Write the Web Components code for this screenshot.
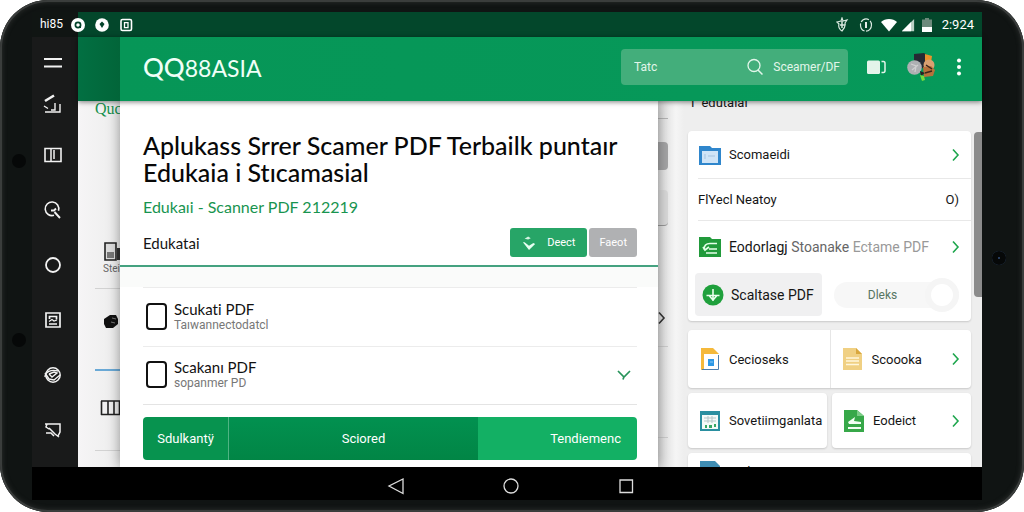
<!DOCTYPE html>
<html lang="id">
<head>
<meta charset="utf-8">
<meta name="viewport" content="width=device-width, initial-scale=1">
<title>QQ88ASIA</title>
<style>
  body {
    margin: 0;
    background: #fff;
    font-family: Roboto, "Liberation Sans", sans-serif;
    font-variant-ligatures: none;
    color: #151515;
  }
</style>
</head>
<body>
<tablet-frame>
  <status-bar slot="status"></status-bar>
  <side-rail slot="rail"></side-rail>
  <app-bar slot="bar"></app-bar>
  <peek-left slot="body"></peek-left>
  <article-panel slot="body">
    <span slot="title">Aplukass Srrer Scamer PDF Terbailk puntaır Edukaia i Stıcamasial</span>
    <span slot="subtitle">Edukaıi - Scanner PDF 212219</span>
    <check-row slot="rows" label="Scukati PDF" note="Taıwannectodatcl"></check-row>
    <check-row slot="rows" label="Scakanı PDF" note="sopanmer PD" open></check-row>
  </article-panel>
  <peek-right slot="body"></peek-right>
  <side-panel slot="body"></side-panel>
  <nav-bar slot="nav"></nav-bar>
</tablet-frame>

<script>
const ICONS = {
  menu: ['0 0 20 20', '<path d="M1 6h18M1 13.500h18" stroke="currentColor" stroke-width="2"/>'],
  edit: ['0 0 20 20', '<path d="M2 7L11 1.500" stroke="currentColor" stroke-width="2.600"/><path d="M1 12l4 2.500M2 18h15V10M12 9v7H8" fill="none" stroke="currentColor" stroke-width="1.400"/>'],
  book: ['0 0 20 20', '<path d="M2 3.500h16v13H2z" fill="none" stroke="currentColor" stroke-width="1.600"/><path d="M8 4v12M11 5v9" stroke="currentColor" stroke-width="1.500"/>'],
  find: ['0 0 20 20', '<path d="M11 15.300a6.800 6.800 0 1 1 4.500-4.500" fill="none" stroke="currentColor" stroke-width="1.600"/><path d="M8 10.500h3l2-2M11.500 12l5.500 6" fill="none" stroke="currentColor" stroke-width="1.900"/>'],
  ring: ['0 0 20 20', '<circle cx="10" cy="10" r="7" fill="none" stroke="currentColor" stroke-width="1.800"/>'],
  image: ['0 0 20 20', '<path d="M3 3h14v14H3zM6.500 9V6.500h7v3M6 14h8" fill="none" stroke="currentColor" stroke-width="1.700"/><path d="M6 11.500l3-2 2 1.500 3-1" fill="none" stroke="currentColor" stroke-width="1.200"/>'],
  globe: ['0 0 20 20', '<circle cx="10" cy="10" r="7.200" fill="none" stroke="currentColor" stroke-width="1.500"/><path d="M2 12c0-5 6-8 13-6M6 9l3 3 5-4-3-1-5 2M2 8l4 6 5 1 6-5" fill="none" stroke="currentColor" stroke-width="1.400"/>'],
  share: ['0 0 20 20', '<path d="M2 4h15v8l-2 4M4 4l-1 3 3 2M6 8l6 6 4 3M3 13h5l3 3" fill="none" stroke="currentColor" stroke-width="1.500"/>'],
  dotq: ['0 0 16 16', '<circle cx="8" cy="8" r="7" fill="#fff"/><circle cx="8" cy="8" r="2.600" fill="none" stroke="#03432a" stroke-width="1.700"/><path d="M9 9l2 2" stroke="#03432a"/>'],
  dotp: ['0 0 16 16', '<circle cx="8" cy="8" r="6.800" fill="#fff"/><path d="M8 4.500l2.500 2.500L8 11 5.500 7z" fill="#03432a"/>'],
  boxq: ['0 0 16 16', '<rect x="3" y="2.500" width="10.500" height="11" rx="1.500" fill="none" stroke="#fff" stroke-width="1.600"/><path d="M6.500 5.700h3.500v5h-3.500z" fill="none" stroke="#fff" stroke-width="1.300"/>'],
  shield: ['0 0 16 16', '<path d="M3 5l4-1 1-3 1 3 4-1-2 3c1 4-1 6-3 8-2-1-4-4-3-7z" fill="none" stroke="#dbe9e1" stroke-width="1.200"/><path d="M8 4v7M6 8h5" stroke="#dbe9e1" stroke-width="1.500"/>'],
  alarm: ['0 0 16 16', '<ellipse cx="8" cy="8" rx="5.500" ry="6.200" fill="none" stroke="#dbe9e1" stroke-width="1.200" stroke-dasharray="9 1.500"/><path d="M8 5v6" stroke="#fff" stroke-width="1.800"/>'],
  wifi: ['0 0 16 16', '<path d="M0 5c4-4 12-4 16 0l-8 9.500z" fill="#fff"/>'],
  signal: ['0 0 16 16', '<path d="M1 15L15 1v14z" fill="#b9cfc3"/><path d="M1 15L11.500 4.500V15z" fill="#fff"/>'],
  battery: ['0 0 16 16', '<path d="M3 2.500h3V1h4v1.500h3V15H3z" fill="#6d8a7c"/><path d="M3 10h10v5H3z" fill="#fff"/>'],
  search: ['0 0 20 20', '<circle cx="9" cy="8.500" r="6" fill="none" stroke="currentColor" stroke-width="1.300"/><path d="M13 13l4.500 4.500" stroke="currentColor" stroke-width="1.500"/>'],
  cast: ['0 0 20 20', '<rect x="1" y="3.500" width="13" height="13.500" rx="1.500" fill="#e3f4ea"/><path d="M15.500 4.500h2q1.500 0 1.500 2v7q0 2-1.500 2h-2" fill="none" stroke="#e3f4ea" stroke-width="1.500"/>'],
  avatar: ['0 0 28 28', '<path d="M7 1l10-1 3 2v12l-8 2-5-5z" fill="#252a33"/><path d="M18 1l7 2-1 7-6-1z" fill="#e8922c"/><circle cx="22" cy="12" r="5.500" fill="#d9a071"/><path d="M16 14l8-1 4 4-2 6-9 1z" fill="#b7713b"/><path d="M19 12l6 4M18 20l7-2" stroke="#3b241b" stroke-width="1.500"/><circle cx="7.500" cy="14.500" r="7.300" fill="#aeb0b3"/><path d="M4 11l5 2-1 6M5 17l6-5" stroke="#cfcfd0" fill="none" stroke-width="1.300"/><path d="M13 18l5 2-4 3z" fill="#282022"/><path d="M13 22l4 1 1 4-3 1z" fill="#76dd3c"/>'],
  dots: ['0 0 20 20', '<g fill="#fff"><circle cx="10" cy="3.500" r="2"/><circle cx="10" cy="10" r="2"/><circle cx="10" cy="16.500" r="2"/></g>'],
  download: ['0 0 16 16', '<path d="M3 3l4-2.500 3 2L7 4z" fill="#d5f3e2"/><path d="M1 7l2 0 5 4 5-3 2 1-7 7z" fill="#e6fff1"/>'],
  right: ['0 0 16 16', '<path d="M5 2.500l5 5.500-5 5.500" fill="none" stroke="currentColor" stroke-width="1.600"/>'],
  down: ['0 0 16 16', '<path d="M2 4l6 6 6-6M8 9.500l-1 3" fill="none" stroke="currentColor" stroke-width="1.700"/>'],
  folder: ['0 0 24 24', '<path d="M1 3h11l2 2h9v17H1z" fill="#2f86cc"/><path d="M4 8h16v12H4z" fill="#cfe4f7"/><path d="M7 11v5M10 13h7" stroke="#a5c3df"/>'],
  greenfolder: ['0 0 24 24', '<path d="M1 2h11l2 2h9v18H1z" fill="#219a3b"/><path d="M19 8.500h-7q-6 0-6 6M5 12l2 3 4-3M11 14h8M8 18h11" fill="none" stroke="#e5ffe9" stroke-width="1.700"/>'],
  plus: ['0 0 24 24', '<circle cx="12" cy="12" r="10.500" fill="#1fa03c"/><path d="M12 6v12M5.500 12.500h13M8.500 13l3.500 4 3.500-4" fill="none" stroke="#eaffee" stroke-width="1.600"/>'],
  doc: ['0 0 24 24', '<path d="M3 1h12l6 6v16H3z" fill="#f5b93b"/><path d="M6 7h15v16H6z" fill="#fff"/><path d="M20.500 8v14.500H4" fill="none" stroke="#4a7daf" stroke-width="1"/><path d="M10 12h6v7h-6z" fill="#2d98e6"/><path d="M12 15h3" stroke="#8cc8f5"/>'],
  note: ['0 0 24 24', '<path d="M2 1h13l6 6v16H2z" fill="#f0d083"/><path d="M15 1l6 6h-6z" fill="#d9a83f"/><path d="M5 11h13M5 14h13M5 17.500h13" stroke="#fff6dc" stroke-width="1.300"/>'],
  sheet: ['0 0 24 24', '<path d="M2 2h20v20H2z" fill="#2a8fa0"/><path d="M4 6h16v14H4z" fill="#f4faf8"/><path d="M6 9h12M6 12h12M10 7v7M14 7v7" stroke="#b5c7c8"/><path d="M7 16h2v3H7zM11 16h3v3h-3zM16 15h2v3h-2z" fill="#35a763"/>'],
  greendoc: ['0 0 24 24', '<path d="M2 1h13l7 6v16H2z" fill="#37a849"/><path d="M15 1l7 6h-7z" fill="#7bcc86"/><path d="M6 13l7-5-1 4 7 1v2H7zM6 18h13v2H6z" fill="#f1fff3"/>'],
  bluefile: ['0 0 24 24', '<path d="M2 2h15l5 5v15H2z" fill="#3f8db3"/>'],
  device: ['0 0 20 20', '<path d="M2 1h11v17H2z" fill="#ddd" stroke="#222" stroke-width="1.600"/><path d="M4 10h7v6H4z" fill="#777"/><path d="M14 6h6v12h-6z" fill="#333"/>'],
  blob: ['0 0 20 20', '<path d="M3 7l6-4 6 0 2 4 0 5-5 4-7 0-2-4z" fill="#111"/><path d="M11 6l4 1M10 10l4 1" stroke="#777"/>'],
  film: ['0 0 20 20', '<path d="M1 3h19M1 16.500h19M1.500 3v14M8 3v14M14 3v14M19.500 3v14" fill="none" stroke="#222" stroke-width="1.600"/>'],
  back: ['0 0 20 20', '<path d="M17 3v14.500L3 10z" fill="none" stroke="#ddd" stroke-width="1.300"/>'],
  home: ['0 0 20 20', '<circle cx="10" cy="10" r="7" fill="none" stroke="#ddd" stroke-width="1.300"/>'],
  recent: ['0 0 20 20', '<path d="M4 4h12.500v12.500H4z" fill="none" stroke="#ddd" stroke-width="1.300"/>']
};

function define(name, html) {
  customElements.define(name, class extends HTMLElement {
    constructor() {
      super();
      this.attachShadow({ mode: 'open' });
      this.shadowRoot.innerHTML = html;
    }
  });
}

// <ui-icon name="search" size="20">
class UiIcon extends HTMLElement {
  constructor() {
    super();
    this.attachShadow({ mode: 'open' });
  }

  connectedCallback() {
    const [box, shapes] = ICONS[this.getAttribute('name')];
    const size = this.getAttribute('size') || 20;
    this.shadowRoot.innerHTML = `
      <style>
        :host { display: block; flex: none; }
        svg { display: block; }
      </style>
      <svg viewBox="${box}" width="${size}" height="${size}" aria-hidden="true">${shapes}</svg>
    `;
  }
}
customElements.define('ui-icon', UiIcon);

define('tablet-frame', `
  <style>
    :host {
      display: flex;
      flex-direction: column;
      position: relative;
      box-sizing: border-box;
      height: 100vh;
      padding: 12px 42px 12px 32px;
      border-radius: 48px;
      background: #101413;
      box-shadow: inset 0 0 0 2px #3a3d3c, inset 0 0 4px 3px #262928;
      overflow: hidden;
    }
    .middle { display: flex; flex: 1; min-height: 0; }
    .app { display: flex; flex-direction: column; flex: 1; min-width: 0; }
    .body { display: flex; flex: 1; min-height: 0; overflow: hidden; background: #f3f3f3; }
    i { position: absolute; width: 14px; height: 14px; border-radius: 50%; background: #060808; }
    .a { left: 12px; top: 30%; }
    .b { left: 12px; top: 65%; }
    .c { right: 18px; top: 49%; box-shadow: inset 0 0 0 6px #060808; background: #35507c; }
  </style>
  <i class="a"></i><i class="b"></i><i class="c"></i>
  <slot name="status"></slot>
  <div class="middle">
    <slot name="rail"></slot>
    <div class="app">
      <slot name="bar"></slot>
      <div class="body"><slot name="body"></slot></div>
    </div>
  </div>
  <slot name="nav"></slot>
`);

define('status-bar', `
  <style>
    :host {
      display: flex;
      align-items: center;
      height: 25px;
      padding: 0 8px;
      color: #fff;
      font-size: 12px;
      background: linear-gradient(90deg, #101513 46px, #03472b 46px);
    }
    .left { display: flex; gap: 8px; margin-right: auto; }
    .left span { width: 22px; }
    .right { display: flex; align-items: center; gap: 4px; }
    .right ui-icon:first-child { margin-right: 4px; }
    .right ui-icon:nth-child(2) { margin-right: 3px; }
    time { font-size: 13px; margin-left: 3px; }
  </style>
  <div class="left">
    <span>hi85</span>
    <ui-icon name="dotq" size="16"></ui-icon>
    <ui-icon name="dotp" size="16"></ui-icon>
    <ui-icon name="boxq" size="16"></ui-icon>
  </div>
  <div class="right">
    <ui-icon name="shield" size="16"></ui-icon>
    <ui-icon name="alarm" size="16"></ui-icon>
    <ui-icon name="wifi" size="16"></ui-icon>
    <ui-icon name="signal" size="14"></ui-icon>
    <ui-icon name="battery" size="16"></ui-icon>
    <time>2:924</time>
  </div>
`);

define('side-rail', `
  <style>
    :host {
      display: flex;
      flex-direction: column;
      box-sizing: border-box;
      width: 46px;
      padding: 8px 4px 0 0;
      background: #191a1a;
    }
    button {
      display: flex;
      align-items: center;
      justify-content: center;
      flex: none;
      height: 55px;
      padding: 0;
      border: none;
      background: none;
      color: #f2f2f2;
    }
    button:nth-of-type(1) { height: 36px; }
    button:nth-of-type(2) { height: 46px; }
  </style>
  <button aria-label="Menu"><ui-icon name="menu"></ui-icon></button>
  <button aria-label="Edit"><ui-icon name="edit"></ui-icon></button>
  <button aria-label="Buku"><ui-icon name="book"></ui-icon></button>
  <button aria-label="Cari"><ui-icon name="find"></ui-icon></button>
  <button aria-label="Pindai"><ui-icon name="ring"></ui-icon></button>
  <button aria-label="Gambar"><ui-icon name="image"></ui-icon></button>
  <button aria-label="Web"><ui-icon name="globe"></ui-icon></button>
  <button aria-label="Bagikan"><ui-icon name="share"></ui-icon></button>
`);

define('app-bar', `
  <style>
    :host {
      display: flex;
      align-items: center;
      flex: none;
      height: 64px;
      padding: 0 13px 4px 65px;
      box-sizing: border-box;
      z-index: 2;
      color: #fff;
      background: linear-gradient(90deg, #027042, #026539 42px, #069657 42px, #06995a);
      box-shadow: 0 1px 5px rgba(0, 0, 0, .5);
    }
    .logo {
      display: flex;
      align-items: baseline;
      margin-right: auto;
      font-family: Lato, sans-serif;
      font-size: 23px;
      color: #f0fff7;
    }
    .logo b { font-size: 26px; font-weight: 500; }
    .search {
      display: flex;
      align-items: center;
      box-sizing: border-box;
      width: 227px;
      height: 36px;
      padding: 0 8px 0 13px;
      border-radius: 4px;
      background: #43ae7b;
    }
    input {
      flex: 1;
      min-width: 0;
      padding: 0;
      border: none;
      outline: none;
      background: none;
      color: #e2f6ea;
      font: 12px Roboto, sans-serif;
    }
    button {
      display: flex;
      align-items: center;
      gap: 8px;
      padding: 0;
      border: none;
      background: none;
      color: #e2f6ea;
      font: 12px Roboto, sans-serif;
    }
    .cast { margin-left: 18px; }
    .user { margin-left: 21px; }
    .more { margin-left: 14px; }
  </style>
  <div class="logo"><b>QQ</b><span>88ASIA</span></div>
  <div class="search">
    <input type="text" aria-label="Cari" value="Tatc">
    <button><ui-icon name="search"></ui-icon>Sceamer/DF</button>
  </div>
  <button class="cast" aria-label="Layar"><ui-icon name="cast"></ui-icon></button>
  <button class="user" aria-label="Akun"><ui-icon name="avatar" size="28"></ui-icon></button>
  <button class="more" aria-label="Lainnya"><ui-icon name="dots"></ui-icon></button>
`);

// page strips that show on both sides of the article
define('peek-left', `
  <style>
    :host { display: block; flex: none; width: 42px; overflow: hidden; background: linear-gradient(90deg, #f6f5f6, #ededed); }
    div { box-sizing: border-box; margin-left: 17px; border-bottom: 1px solid #d2d2d2; }
    .brand { height: 188px; font: 16px/16px "Liberation Serif", serif; color: #16904d; }
    .brand ui-icon { margin: 125px 0 0 8px; }
    .brand span { display: block; padding-left: 8px; font: 10px/14px Roboto, sans-serif; color: #666; }
    .blob { height: 82px; padding: 23px 0 0 6px; border-bottom: 2px solid #6aa9d6; }
    .film { height: 80px; padding: 27px 0 0 5px; }
  </style>
  <div class="brand">Quc<ui-icon name="device"></ui-icon><span>Stei</span></div>
  <div class="blob"><ui-icon name="blob"></ui-icon></div>
  <div class="film"><ui-icon name="film"></ui-icon></div>
`);

define('peek-right', `
  <style>
    :host { display: block; flex: none; width: 26px; background: linear-gradient(90deg, #dcdcdc, #f5f5f5 18px, #eee); }
    div { box-sizing: border-box; width: 10px; }
    .line { height: 18px; border-bottom: 1px solid #b5b5b5; }
    .dark { height: 28px; margin-top: 23px; border-radius: 0 4px 4px 0; background: #a5a5a6; }
    .light { height: 36px; margin-top: 20px; border-radius: 0 4px 4px 0; background: #dadada; border-bottom: 1px solid #999; }
    .next { height: 121px; padding-top: 84px; border-bottom: 1px solid #ccc; color: #333; }
    .last { height: 91px; border-bottom: 1px solid #ccc; }
    .next ui-icon { margin-left: -4px; }
  </style>
  <div class="line"></div>
  <div class="dark"></div>
  <div class="light"></div>
  <div class="next"><ui-icon name="right" size="16"></ui-icon></div>
  <div class="last"></div>
`);

define('article-panel', `
  <style>
    :host {
      display: block;
      flex: 1;
      min-width: 0;
      z-index: 1;
      background: #fff;
      box-shadow: 0 0 12px rgba(0, 0, 0, .4);
      font-family: Lato, sans-serif;
    }
    header { padding: 31px 21px 8px 23px; border-bottom: 2px solid #45a280; }
    h1 { margin: 0; font-size: 25px; line-height: 27px; font-weight: 500; color: #080808; }
    h2 { margin: 11px 0; font-size: 16px; line-height: 20px; font-weight: 400; color: #18944f; }
    .tools { display: flex; align-items: center; gap: 2px; height: 29px; }
    .tools span { margin-right: auto; font-size: 15px; }
    button { border: none; color: #fff; font: 13px Roboto, sans-serif; }
    .tools button {
      display: flex;
      align-items: center;
      justify-content: center;
      gap: 11px;
      height: 29px;
      padding: 0 10px;
      border-radius: 3px;
      background: #b0b1b3;
      font-size: 11px;
    }
    .tools .go { padding: 0 12px; background: #27a567; }
    .rows { padding: 20px 21px 12px 23px; background: linear-gradient(#fafbfa 20px, #fff 20px); }
    .segments {
      display: grid;
      grid-template-columns: 86fr 249fr 159fr;
      height: 43px;
      margin: 0 21px 0 23px;
      border-radius: 4px;
      overflow: hidden;
    }
    .segments button { padding: 0; }
    .segments .one { background: #07934f; border-right: 1px solid #4fb483; }
    .segments .two { padding-left: 20px; background: linear-gradient(#029150, #018545); }
    .segments .three { padding-right: 16px; background: #13b064; text-align: right; }
  </style>
  <header>
    <h1><slot name="title"></slot></h1>
    <h2><slot name="subtitle"></slot></h2>
    <div class="tools">
      <span>Edukatai</span>
      <button class="go"><ui-icon name="download" size="14"></ui-icon>Deect</button>
      <button>Faeot</button>
    </div>
  </header>
  <div class="rows"><slot name="rows"></slot></div>
  <div class="segments">
    <button class="one">Sdulkantÿ</button>
    <button class="two">Sciored</button>
    <button class="three">Tendiemenc</button>
  </div>
`);

class CheckRow extends HTMLElement {
  constructor() {
    super();
    this.attachShadow({ mode: 'open' });
    this.shadowRoot.innerHTML = `
      <style>
        :host {
          display: flex;
          align-items: center;
          box-sizing: border-box;
          height: 59px;
          padding: 0 5px 2px 3px;
          border-top: 1px solid #ececec;
        }
        :host(:last-of-type) { border-bottom: 1px solid #e4e4e4; }
        input {
          appearance: none;
          width: 21px;
          height: 27px;
          margin: 0 7px 0 0;
          border: 2px solid #111;
          border-radius: 4px;
        }
        label { flex: 1; font-size: 15px; line-height: 17px; color: #111; }
        small { display: block; font: 12px/14px Roboto, sans-serif; color: #777; }
        ui-icon { color: #27935a; }
      </style>
      <input type="checkbox" id="pick">
      <label for="pick">${this.getAttribute('label')}<small>${this.getAttribute('note')}</small></label>
      ${this.hasAttribute('open') ? '<ui-icon name="down" size="16"></ui-icon>' : ''}
    `;
  }
}
customElements.define('check-row', CheckRow);

define('file-item', `
  <style>
    :host { display: flex; align-items: center; gap: 7px; box-sizing: border-box; font-size: 13px; white-space: nowrap; }
    .text { flex: 1; }
    ::slotted(a) { color: inherit; text-decoration: none; }
    ::slotted(ui-icon[name="right"]) { color: #1ea64d; }
  </style>
  <slot name="icon"></slot>
  <div class="text"><slot></slot></div>
  <slot name="end"></slot>
`);

define('side-panel', `
  <style>
    :host { display: flex; flex: none; width: 298px; background: #eee; }
    .col { flex: 1; padding: 0 3px 0 4px; min-width: 0; }
    h3 { margin: -5px 0 21px; padding-left: 3px; font-size: 13px; line-height: 14px; font-weight: 400; }
    .card, .cell { background: #fff; border-radius: 4px; box-shadow: 0 1px 2px rgba(0, 0, 0, .16); }
    .card { padding: 0 0 5px 10px; }
    file-item { height: 48px; padding-right: 7px; border-bottom: 1px solid #e8e8e8; }
    .plain { height: 42px; padding-right: 12px; }
    .wide { height: 52px; border: none; font-size: 14px; }
    .s1 { color: #666; }
    .s2 { color: #999; }
    .actions { display: flex; align-items: center; gap: 12px; padding-right: 12px; }
    .actions button {
      display: flex;
      align-items: center;
      gap: 6px;
      height: 43px;
      margin-left: -3px;
      padding: 0 8px 0 6px;
      border: none;
      border-radius: 4px;
      background: #f0f0f1;
      color: #151515;
      font: 14px Roboto, sans-serif;
    }
    .actions label {
      display: flex;
      align-items: center;
      flex: 1;
      height: 26px;
      padding-left: 34px;
      border-radius: 13px;
      background: #f7f7f7;
      font-size: 12px;
      color: #567562;
    }
    input {
      appearance: none;
      width: 34px;
      height: 34px;
      margin: 0 0 0 auto;
      border: 6px solid #f5f5f5;
      border-radius: 50%;
      background: #fff;
    }
    .grid { display: grid; grid-template-columns: repeat(2, minmax(0, 1fr)); gap: 5px; margin: 9px 0 5px; }
    .grid file-item { height: 55px; padding-left: 10px; border: none; }
    .grid .top { height: 58px; }
    .pair { grid-column: 1 / 3; display: grid; grid-template-columns: 1fr 1fr; }
    .pair file-item + file-item { border-left: 1px solid #e6e6e6; }
    .last { height: 36px; padding-left: 10px; border: none; }
    .bar { width: 8px; height: 165px; margin-top: 31px; border-radius: 4px 0 0 4px; background: #8b8b8b; }
  </style>
  <div class="col">
    <h3>Γ edutalal</h3>
    <div class="card">
      <file-item><ui-icon slot="icon" name="folder" size="24"></ui-icon><a href="#">Scomaeidi</a><ui-icon slot="end" name="right" size="16"></ui-icon></file-item>
      <file-item class="plain"><a href="#">FlYecl Neatoy</a><span slot="end">O)</span></file-item>
      <file-item class="wide"><ui-icon slot="icon" name="greenfolder" size="24"></ui-icon><a href="#">Eodorlagj <span class="s1">Stoanake</span> <span class="s2">Ectame PDF</span></a><ui-icon slot="end" name="right" size="16"></ui-icon></file-item>
      <div class="actions">
        <button><ui-icon name="plus" size="24"></ui-icon>Scaltase PDF</button>
        <label>Dleks<input type="checkbox" role="switch"></label>
      </div>
    </div>
    <div class="grid">
      <div class="cell pair">
        <file-item class="top"><ui-icon slot="icon" name="doc" size="24"></ui-icon><a href="#">Cecioseks</a></file-item>
        <file-item class="top"><ui-icon slot="icon" name="note" size="24"></ui-icon><a href="#">Scoooka</a><ui-icon slot="end" name="right" size="16"></ui-icon></file-item>
      </div>
      <file-item class="cell"><ui-icon slot="icon" name="sheet" size="24"></ui-icon><a href="#">Sovetiimganlata</a></file-item>
      <file-item class="cell"><ui-icon slot="icon" name="greendoc" size="24"></ui-icon><a href="#">Eodeict</a><ui-icon slot="end" name="right" size="16"></ui-icon></file-item>
    </div>
    <file-item class="cell last"><ui-icon slot="icon" name="bluefile" size="24"></ui-icon><a href="#">Ecdia</a></file-item>
  </div>
  <div class="bar"></div>
`);

define('nav-bar', `
  <style>
    :host { display: flex; align-items: center; justify-content: center; gap: 95px; height: 33px; padding: 4px 0 0 8px; box-sizing: border-box; z-index: 3; background: #000; }
    button { padding: 0; border: none; background: none; }
  </style>
  <button aria-label="Kembali"><ui-icon name="back"></ui-icon></button>
  <button aria-label="Beranda"><ui-icon name="home"></ui-icon></button>
  <button aria-label="Terbaru"><ui-icon name="recent"></ui-icon></button>
`);
</script>
</body>
</html>
